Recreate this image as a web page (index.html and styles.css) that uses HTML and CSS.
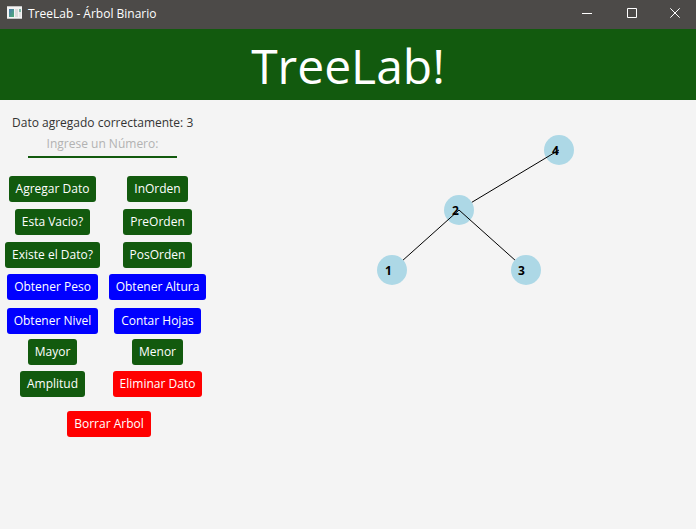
FILE: index.html
```html
<!DOCTYPE html>
<html lang="es">
<head>
<meta charset="utf-8">
<title>TreeLab - Árbol Binario</title>
<link rel="stylesheet" href="styles.css">
</head>
<body>
<header class="titlebar">
  <svg class="app-icon" width="16" height="14" viewBox="0 0 16 14" aria-hidden="true">
    <defs>
      <linearGradient id="pane" x1="0" y1="0" x2="1" y2="1">
        <stop offset="0" stop-color="#4a78b0"/>
        <stop offset="1" stop-color="#4fae74"/>
      </linearGradient>
    </defs>
    <rect x="0" y="0" width="15" height="13" fill="#f4f4f4"/>
    <path d="M0 .5H15M0 12.500H15" stroke="#c4c4c4"/>
    <rect x="2" y="3" width="5" height="8" fill="url(#pane)"/>
    <rect x="8" y="3" width="3" height="8" fill="#dcdcdc"/>
    <rect x="12" y="3" width="2" height="3" fill="#7fb8a8"/>
    <rect x="12" y="6" width="2" height="5" fill="#e6e6e6"/>
  </svg>
  <span class="window-name">TreeLab - Árbol Binario</span>
  <div class="window-controls">
    <button type="button" aria-label="Minimizar"><svg width="10" height="10" viewBox="0 0 10 10"><path d="M0 5.500H10"/></svg></button>
    <button type="button" aria-label="Maximizar"><svg width="10" height="10" viewBox="0 0 10 10"><path d="M.5 .5H9.500V9.500H.5Z"/></svg></button>
    <button type="button" class="close" aria-label="Cerrar"><svg width="10" height="10" viewBox="0 0 10 10"><path d="M.3 .3L9.700 9.700M9.700 .3L.3 9.700"/></svg></button>
  </div>
</header>
<h1 class="banner">TreeLab!</h1>
<main class="workspace">
  <form class="panel">
    <label class="status" for="numero">Dato agregado correctamente: 3</label>
    <input class="number" id="numero" type="text" placeholder="Ingrese un Número:">
    <div class="group">
      <button type="button">Agregar Dato</button>
      <button type="button">InOrden</button>
      <button type="button">Esta Vacio?</button>
      <button type="button">PreOrden</button>
      <button type="button">Existe el Dato?</button>
      <button type="button">PosOrden</button>
    </div>
    <div class="group measures">
      <button type="button">Obtener Peso</button>
      <button type="button">Obtener Altura</button>
      <button type="button">Obtener Nivel</button>
      <button type="button">Contar Hojas</button>
    </div>
    <div class="group extremes">
      <button type="button">Mayor</button>
      <button type="button">Menor</button>
      <button type="button">Amplitud</button>
      <button type="button" class="danger">Eliminar Dato</button>
    </div>
    <button type="button" class="danger clear">Borrar Arbol</button>
  </form>
  <svg class="tree" width="220" height="170" viewBox="370 125 220 170" role="img" aria-label="Árbol binario">
    <circle class="node" cx="559" cy="150" r="15"/>
    <path class="edge" d="M559 150L459 210"/>
    <circle class="node" cx="459" cy="210" r="15"/>
    <path class="edge" d="M392 270L459 210L526 270"/>
    <circle class="node" cx="392" cy="270" r="15"/>
    <circle class="node" cx="526" cy="270" r="15"/>
    <g class="values">
      <text x="552" y="155">4</text>
      <text x="452" y="215">2</text>
      <text x="385" y="275">1</text>
      <text x="518" y="275">3</text>
    </g>
  </svg>
</main>
</body>
</html>
```
FILE: styles.css
```css
* { box-sizing: border-box; }

body {
  margin: 0;
  min-height: 100vh;
  background: #f4f4f4;
  color: #333;
  font: 12px/16px "Open Sans", "Noto Sans", sans-serif;
}

button, input { font: inherit; }

.titlebar {
  display: flex;
  align-items: center;
  height: 29px;
  padding-left: 7px;
  background: #4c4a48;
  color: #fff;
}

.app-icon { margin-right: 5px; margin-bottom: 3px; }

.window-name { margin-bottom: 1px; }

.window-controls {
  display: flex;
  align-self: stretch;
  margin-left: auto;
}

.window-controls button {
  display: flex;
  align-items: center;
  justify-content: center;
  width: 45px;
  padding: 0 0 3px;
  border: 0;
  background: none;
}

.window-controls .close { width: 42px; }

.window-controls path { fill: none; stroke: #fff; }

.banner {
  margin: 0;
  padding-top: 3px;
  background: #125a0e;
  color: #fff;
  font-size: 48px;
  font-weight: 400;
  line-height: 68px;
  text-align: center;
}

.workspace {
  display: flex;
  align-items: flex-start;
}

.panel {
  display: flex;
  flex-direction: column;
  width: 210px;
  padding-top: 15px;
}

.status { margin-left: 12px; white-space: nowrap; }

.number {
  width: 149px;
  height: 27px;
  margin: 0 0 18px 28px;
  padding: 0;
  border: 0;
  border-bottom: 2px solid #125a0e;
  background: none;
  text-align: center;
  outline: 0;
}

.number::placeholder { color: #b2b2b2; opacity: 1; }

.group {
  display: grid;
  grid-template-columns: 1fr 1fr;
  justify-items: center;
  gap: 7px 0;
  margin-bottom: 6px;
}

.measures { row-gap: 8px; margin-bottom: 5px; }

.extremes { row-gap: 6px; }

.panel button {
  height: 26px;
  padding: 0 7px;
  border: 0;
  border-radius: 3px;
  background: #125a0e;
  color: #fff;
  white-space: nowrap;
}

.panel .measures button { background: #00f; }

.panel .danger { background: #f00; }

.clear { align-self: center; margin: 8px 0 0 8px; }

.tree { margin: 25px 0 0 160px; }

.node { fill: #add8e6; }

.edge { fill: none; stroke: #000; }

.values { font-weight: 700; fill: #000; }
```
